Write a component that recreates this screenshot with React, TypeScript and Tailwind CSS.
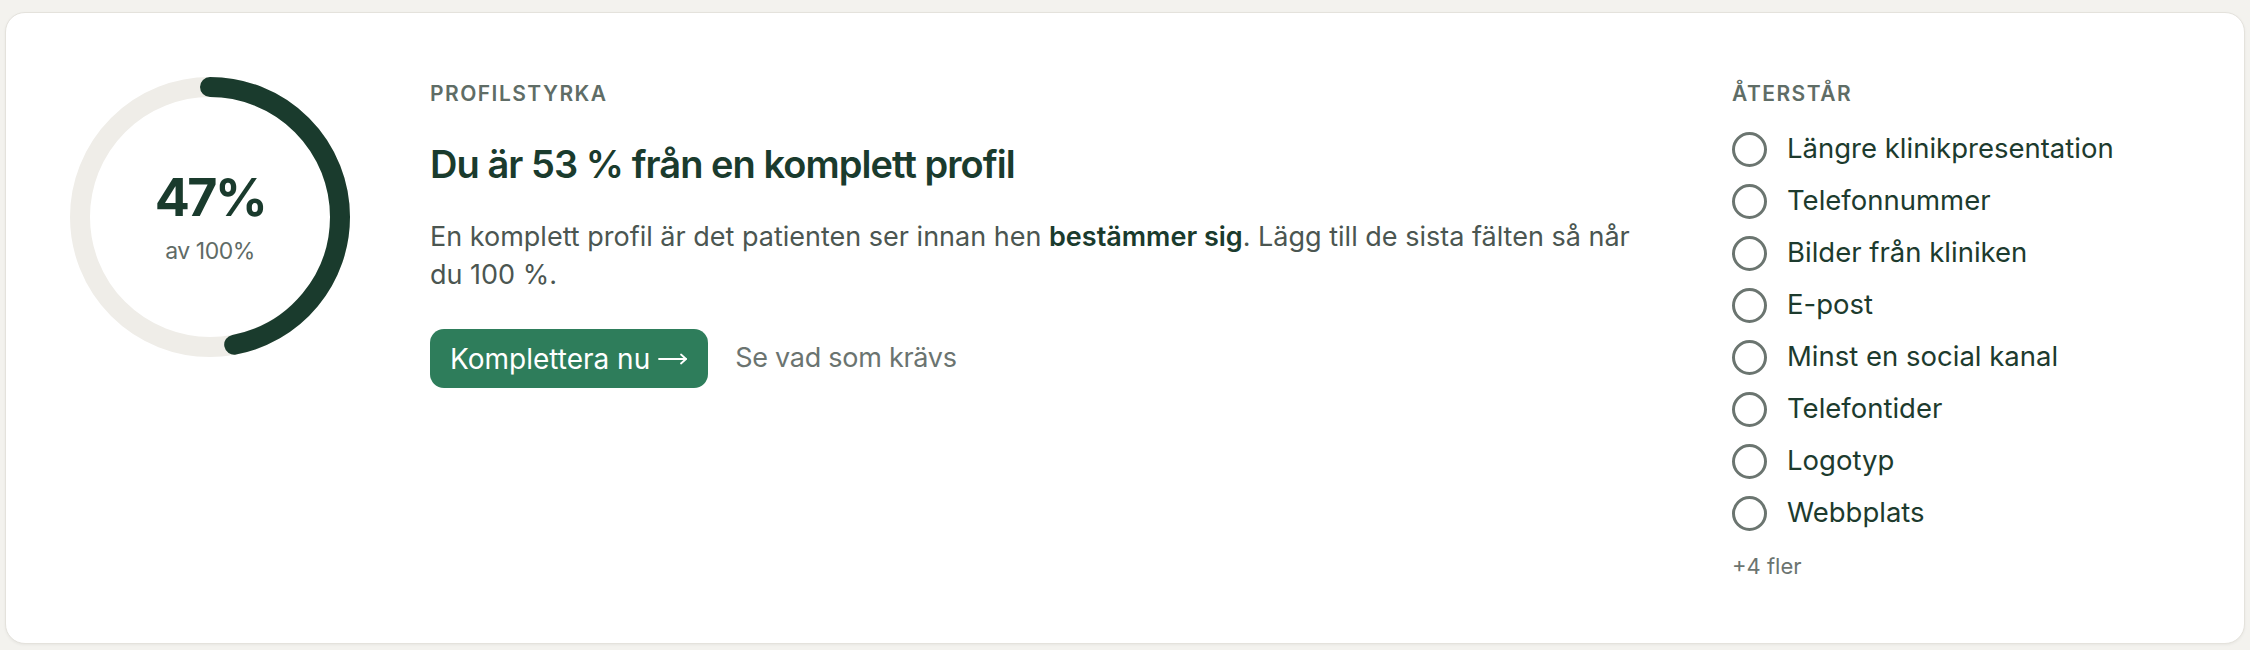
import React from 'react'

const REMAINING = [
  'Längre klinikpresentation',
  'Telefonnummer',
  'Bilder från kliniken',
  'E-post',
  'Minst en social kanal',
  'Telefontider',
  'Logotyp',
  'Webbplats',
]

function ProgressRing({ value }: { value: number }) {
  const size = 280
  const stroke = 20
  const r = (size - stroke) / 2
  const c = 2 * Math.PI * r
  return (
    <div className="relative h-[280px] w-[280px] shrink-0">
      <svg width={size} height={size} viewBox={`0 0 ${size} ${size}`} className="-rotate-90">
        <circle cx={size / 2} cy={size / 2} r={r} fill="none" stroke="#efede8" strokeWidth={stroke} />
        <circle
          cx={size / 2}
          cy={size / 2}
          r={r}
          fill="none"
          stroke="#1a3b2d"
          strokeWidth={stroke}
          strokeLinecap="round"
          strokeDasharray={`${(c * value) / 100} ${c}`}
        />
      </svg>
      <div className="absolute inset-0 flex flex-col items-center pt-[93px]">
        <div className="text-[52px] leading-[56px] font-bold tracking-[-0.05em] text-[#1a3b2d]">{value}%</div>
        <div className="mt-[12px] text-[23px] leading-[26px] tracking-[-0.02em] text-[#5f6b66]">av 100%</div>
      </div>
    </div>
  )
}

function LongArrow() {
  return (
    <svg width="30" height="14" viewBox="0 0 30 14" fill="none" stroke="currentColor" strokeWidth="1.8" strokeLinecap="round" strokeLinejoin="round">
      <path d="M1 7h27" />
      <path d="M23 2.5 28 7l-5 4.5" />
    </svg>
  )
}

export default function App() {
  return (
    <div className="min-h-[650px] bg-[#f3f2ee] px-[5px] pt-[12px] font-['Inter',sans-serif]">
      <div className="flex h-[632px] items-start gap-[80px] rounded-[20px] border border-[#e4e2dc] bg-white p-16 shadow-[0_1px_3px_rgba(0,0,0,0.05)]">
        <ProgressRing value={47} />

        <div className="min-w-0 flex-1">
          <div className="mt-[3px] text-[21px] leading-[28px] font-semibold tracking-[0.07em] text-[#5f6d66] uppercase">
            Profilstyrka
          </div>
          <h2 className="mt-[33px] text-[38px] leading-[46px] font-semibold tracking-[-0.025em] text-[#1a3b2d]">
            Du är 53 % från en komplett profil
          </h2>
          <p className="mt-[31px] max-w-[1218px] text-[27px] leading-[38px] text-[#4b5651]">
            En komplett profil är det patienten ser innan hen{' '}
            <strong className="font-semibold text-[#1a3b2d]">bestämmer sig</strong>. Lägg till de sista fälten så
            når du 100 %.
          </p>
          <div className="mt-[35px] flex items-center gap-[27px]">
            <button className="flex h-[59px] items-center gap-[8px] rounded-[14px] bg-[#2e7d5b] px-[20px] text-[28px] text-white">
              Komplettera nu
              <LongArrow />
            </button>
            <button className="text-[27px] tracking-[-0.01em] text-[#6b7470]">Se vad som krävs</button>
          </div>
        </div>

        <div className="w-[448px] shrink-0">
          <div className="mt-[3px] text-[21px] leading-[28px] font-semibold tracking-[0.07em] text-[#5f6d66] uppercase">
            Återstår
          </div>
          <ul className="mt-[15px]">
            {REMAINING.map((item) => (
              <li key={item} className="flex h-[52px] items-center gap-[20px]">
                <span className="h-[35px] w-[35px] shrink-0 rounded-full border-[3px] border-[#6b7570]" />
                <span className="text-[27.5px] text-[#1d3b2e]">{item}</span>
              </li>
            ))}
          </ul>
          <div className="mt-[13px] text-[22px] leading-[28px] text-[#6b7470]">+4 fler</div>
        </div>
      </div>
    </div>
  )
}
